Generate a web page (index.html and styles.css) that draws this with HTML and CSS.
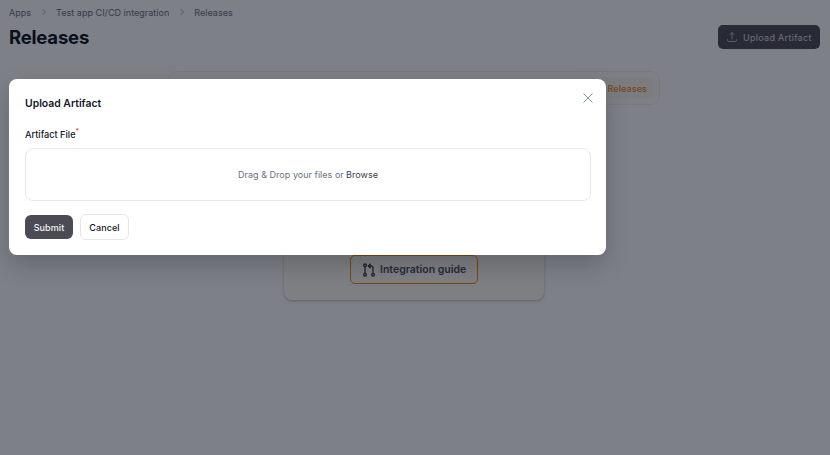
FILE: index.html
```html
<!DOCTYPE html>
<html lang="en">
<head>
    <meta charset="UTF-8">
    <meta name="viewport" content="width=device-width, initial-scale=1.0">
    <title>Releases</title>
    <link rel="stylesheet" href="styles.css">
</head>
<body>
    <div class="page">
        <nav class="breadcrumbs">
            <span>Apps</span>
            <svg class="crumb-sep" viewBox="0 0 8 8"><path d="M2.500 1l3 3-3 3"/></svg>
            <span>Test app CI/CD integration</span>
            <svg class="crumb-sep" viewBox="0 0 8 8"><path d="M2.500 1l3 3-3 3"/></svg>
            <span>Releases</span>
        </nav>
        <header class="page-header">
            <h1>Releases</h1>
            <button class="upload-button">
                <svg class="upload-icon" viewBox="0 0 24 24"><path d="M3 16.500v2.250A2.250 2.250 0 0 0 5.250 21h13.500A2.250 2.250 0 0 0 21 18.750V16.500M16.500 7.500 12 3 7.500 7.500M12 3v13.500"/></svg>
                Upload Artifact
            </button>
        </header>
        <div class="tabs-row">
            <div class="tabs">
                <span class="tab-active">Releases</span>
            </div>
        </div>
        <div class="empty-row">
            <div class="empty-card">
                <button class="guide-button">
                    <svg class="guide-icon" viewBox="0 0 24 24"><path d="M6 7v10M18 16V9a3 3 0 0 0-3-3h-4M14.500 2.500 11 6l3.500 3.500"/><circle cx="6" cy="5" r="2"/><circle cx="6" cy="19" r="2"/><circle cx="18" cy="19" r="2"/></svg>
                    Integration guide
                </button>
            </div>
        </div>
    </div>

    <div class="overlay">
        <div class="modal">
            <div class="modal-head">
                <h2>Upload Artifact</h2>
                <svg class="close-icon" viewBox="0 0 12 12"><path d="M1.500 1.500l9 9M10.500 1.500l-9 9"/></svg>
            </div>
            <div class="field-label">Artifact File<sup>*</sup></div>
            <div class="dropzone">Drag &amp; Drop your files or <span class="browse">Browse</span></div>
            <div class="modal-actions">
                <button class="submit-button">Submit</button>
                <button class="cancel-button">Cancel</button>
            </div>
        </div>
    </div>
</body>
</html>
```

FILE: styles.css
```css
* {
    box-sizing: border-box;
}
body {
    font-family: 'Inter', sans-serif;
    margin: 0;
    height: 455px;
    overflow: hidden;
    background: #fbfcfe;
    color: #111827;
}
button {
    font-family: inherit;
}
.page {
    padding: 6px 10px 0 9px;
}
.breadcrumbs {
    display: flex;
    align-items: center;
    height: 12px;
    font-size: 9px;
    letter-spacing: 0.03px;
    color: #6b7280;
}
.crumb-sep {
    width: 8px;
    height: 8px;
    margin: 0 8px 0 9px;
    fill: none;
    stroke: #9ca3af;
    stroke-width: 0.9;
}
.page-header {
    display: flex;
    justify-content: space-between;
    align-items: flex-start;
    margin-top: 6px;
}
h1 {
    margin: 1px 0 0;
    font-size: 18.500px;
    line-height: 24px;
    font-weight: 700;
    letter-spacing: -0.2px;
}
.upload-button {
    display: flex;
    align-items: center;
    gap: 5px;
    width: 102px;
    height: 24px;
    padding: 0 0 0 8px;
    margin-top: 1px;
    border: none;
    border-radius: 5px;
    background: #4f5158;
    color: #d9dbe0;
    font-size: 9px;
    font-weight: 400;
    letter-spacing: 0.3px;
}
.upload-icon {
    width: 12px;
    height: 12px;
    fill: none;
    stroke: #d9dbe0;
    stroke-width: 1.5;
}
.tabs-row {
    margin: 22px 0 0 159px;
}
.tabs {
    display: flex;
    justify-content: flex-end;
    align-items: center;
    width: 492px;
    height: 34px;
    padding: 5px;
    border: 1px solid #f0efea;
    border-radius: 9px;
    background: #fcfbf7;
}
.tab-active {
    display: flex;
    align-items: center;
    height: 22px;
    padding: 0 7px;
    border-radius: 5px;
    background: #f6f5f1;
    color: #ea8a2a;
    font-size: 9px;
    font-weight: 500;
    letter-spacing: 0.1px;
}
.empty-row {
    margin: 35px 0 0 275px;
}
.empty-card {
    display: flex;
    flex-direction: column;
    justify-content: flex-end;
    align-items: center;
    width: 260px;
    height: 160px;
    padding-bottom: 16px;
    border-radius: 8px;
    background: #fcfbf7;
    box-shadow: 0 1px 3px rgba(0, 0, 0, .25);
}
.guide-button {
    display: flex;
    align-items: center;
    gap: 3px;
    width: 128px;
    height: 29px;
    padding: 0 0 0 10px;
    border: 1px solid #f5870f;
    border-radius: 5px;
    background: transparent;
    color: #4b5264;
    font-size: 10.500px;
    font-weight: 600;
}
.guide-icon {
    width: 16px;
    height: 16px;
    fill: none;
    stroke: #39404f;
    stroke-width: 2;
}
.overlay {
    position: absolute;
    inset: 0;
    padding: 79px 0 0 9px;
    background: rgba(3, 8, 20, .51);
}
.modal {
    width: 597px;
    height: 176px;
    padding: 17px 15px 16px 16px;
    border-radius: 8px;
    background: #fff;
    box-shadow: 0 10px 25px rgba(0, 0, 0, .2);
}
.modal-head {
    display: flex;
    justify-content: space-between;
    align-items: center;
    height: 16px;
}
h2 {
    margin: 0;
    font-size: 10.400px;
    line-height: 16px;
    font-weight: 600;
    color: #111827;
}
.close-icon {
    width: 12px;
    height: 12px;
    margin: -12px -3px 0 0;
    fill: none;
    stroke: #7f93a8;
    stroke-width: 1;
}
.field-label {
    margin-top: 17px;
    height: 12px;
    font-size: 9.200px;
    line-height: 12px;
    font-weight: 500;
    color: #111827;
}
.field-label sup {
    color: #ef4444;
    font-size: 7px;
    line-height: 0;
}
.dropzone {
    display: flex;
    justify-content: center;
    align-items: center;
    gap: 0.25em;
    height: 53px;
    margin-top: 7px;
    border: 1px solid #e5e7eb;
    border-radius: 8px;
    font-size: 9px;
    letter-spacing: 0.03px;
    color: #6b7280;
}
.browse {
    color: #374151;
}
.modal-actions {
    display: flex;
    gap: 7px;
    margin-top: 14px;
}
.submit-button {
    height: 24px;
    width: 48px;
    border: none;
    border-radius: 6px;
    background: #4b4b55;
    color: #f3f4f6;
    font-size: 9px;
    font-weight: 500;
    letter-spacing: 0.1px;
}
.cancel-button {
    height: 26px;
    width: 49px;
    margin-top: -1px;
    border: 1px solid #e5e7eb;
    border-radius: 6px;
    background: #fff;
    color: #111827;
    font-size: 9px;
    font-weight: 500;
    letter-spacing: 0.1px;
}
```
